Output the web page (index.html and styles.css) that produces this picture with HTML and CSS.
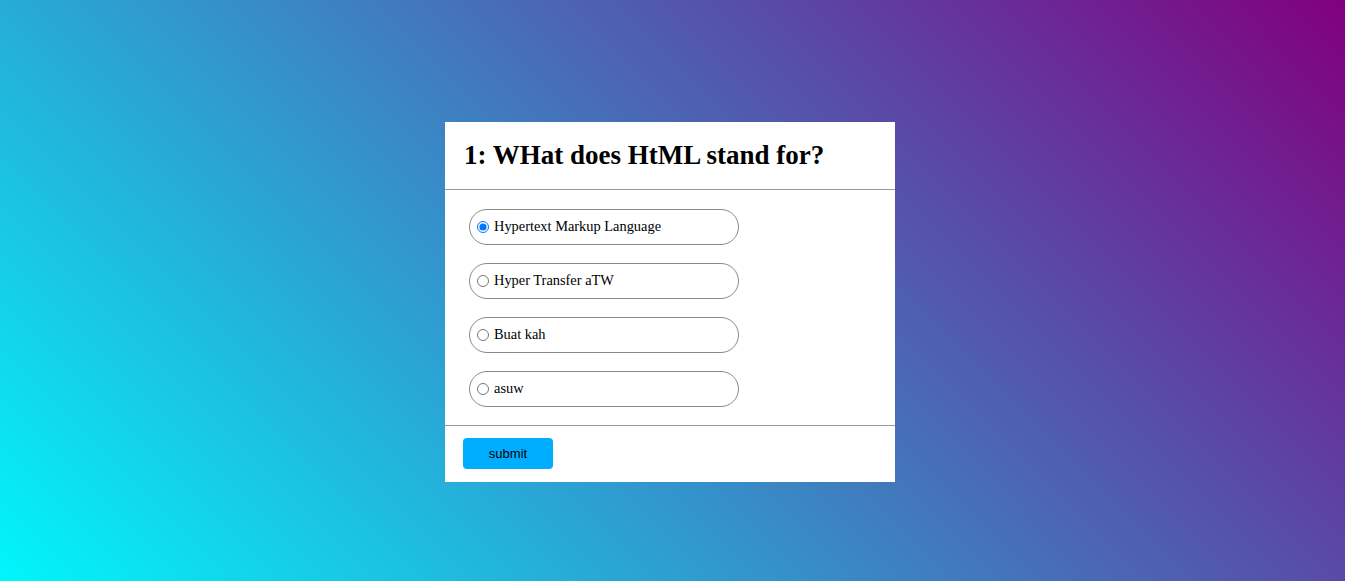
FILE: index.html
```html
<!DOCTYPE html>
<html>
<head>
<meta charset="utf-8">
<link rel="stylesheet" href="styles.css">
</head>
<body>
<div class="page">
  <form class="quiz">
    <div class="quiz-head">
      <h1 class="quiz-title">1: WHat does HtML stand for?</h1>
    </div>
    <div class="quiz-body">
      <label class="option"><input type="radio" name="q1" checked>Hypertext Markup Language</label>
      <label class="option"><input type="radio" name="q1">Hyper Transfer aTW</label>
      <label class="option"><input type="radio" name="q1">Buat kah</label>
      <label class="option"><input type="radio" name="q1">asuw</label>
    </div>
    <div class="quiz-foot">
      <button type="button" class="submit">submit</button>
    </div>
  </form>
</div>
</body>
</html>
```
FILE: styles.css
```css
html, body {
  margin: 0;
  height: 100%;
}
body {
  background: linear-gradient(45deg, #00f6fc, #800080);
  font-family: "Liberation Serif", "Times New Roman", serif;
}
.page {
  height: 100%;
  display: flex;
  justify-content: center;
  align-items: flex-start;
  padding-top: 122px;
  padding-right: 5px;
  box-sizing: border-box;
}
.quiz {
  width: 450px;
  background: #fff;
}
.quiz-head {
  height: 67px;
  border-bottom: 1px solid #999;
  display: flex;
  align-items: center;
  padding: 0 19px;
}
.quiz-title {
  margin: 0;
  font-size: 27px;
  font-weight: bold;
  color: #000;
}
.quiz-body {
  padding: 19px 24px 18px;
  display: flex;
  flex-direction: column;
  gap: 18px;
}
.option {
  width: 270px;
  height: 36px;
  box-sizing: border-box;
  border: 1px solid #888;
  border-radius: 18px;
  display: flex;
  align-items: center;
  padding-left: 2px;
  padding-bottom: 1px;
  font-size: 14.4px;
  color: #000;
}
.option input {
  margin: 0 5px 0 5px;
  width: 12px;
  height: 12px;
}
.quiz-foot {
  border-top: 1px solid #999;
  padding: 12px 18px 13px;
}
.submit {
  width: 90px;
  height: 31px;
  border: none;
  border-radius: 4px;
  background: #00aeff;
  color: #000;
  font-family: "Liberation Sans", Arial, sans-serif;
  font-size: 13px;
  display: block;
}
```
